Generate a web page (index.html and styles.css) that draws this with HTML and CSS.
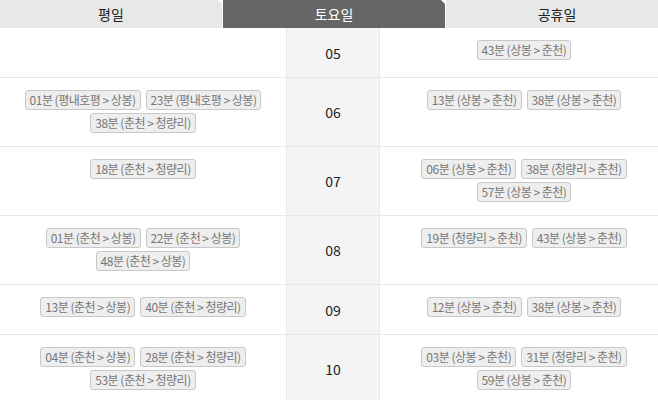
FILE: index.html
```html
<!DOCTYPE html>
<html>
<head>
    <title>시간표</title>
    <link rel="stylesheet" href="styles.css">
</head>
<body>
    <div class="timetable">
        <div class="tabs">
            <div class="tab">평일</div>
            <div class="tab active">토요일</div>
            <div class="tab">공휴일</div>
        </div>

        <div class="row">
            <div class="times"></div>
            <div class="hour">05</div>
            <div class="times">
                <span class="badge">43분 (상봉 &gt; 춘천)</span>
            </div>
        </div>

        <div class="row">
            <div class="times">
                <span class="badge">01분 (평내호평 &gt; 상봉)</span>
                <span class="badge">23분 (평내호평 &gt; 상봉)</span>
                <span class="badge">38분 (춘천 &gt; 청량리)</span>
            </div>
            <div class="hour">06</div>
            <div class="times">
                <span class="badge">13분 (상봉 &gt; 춘천)</span>
                <span class="badge">38분 (상봉 &gt; 춘천)</span>
            </div>
        </div>

        <div class="row">
            <div class="times">
                <span class="badge">18분 (춘천 &gt; 청량리)</span>
            </div>
            <div class="hour">07</div>
            <div class="times">
                <span class="badge">06분 (상봉 &gt; 춘천)</span>
                <span class="badge">38분 (청량리 &gt; 춘천)</span>
                <span class="badge">57분 (상봉 &gt; 춘천)</span>
            </div>
        </div>

        <div class="row">
            <div class="times">
                <span class="badge">01분 (춘천 &gt; 상봉)</span>
                <span class="badge">22분 (춘천 &gt; 상봉)</span>
                <span class="badge">48분 (춘천 &gt; 상봉)</span>
            </div>
            <div class="hour">08</div>
            <div class="times">
                <span class="badge">19분 (청량리 &gt; 춘천)</span>
                <span class="badge">43분 (상봉 &gt; 춘천)</span>
            </div>
        </div>

        <div class="row">
            <div class="times">
                <span class="badge">13분 (춘천 &gt; 상봉)</span>
                <span class="badge">40분 (춘천 &gt; 청량리)</span>
            </div>
            <div class="hour">09</div>
            <div class="times">
                <span class="badge">12분 (상봉 &gt; 춘천)</span>
                <span class="badge">38분 (상봉 &gt; 춘천)</span>
            </div>
        </div>

        <div class="row">
            <div class="times">
                <span class="badge">04분 (춘천 &gt; 상봉)</span>
                <span class="badge">28분 (춘천 &gt; 청량리)</span>
                <span class="badge">53분 (춘천 &gt; 청량리)</span>
            </div>
            <div class="hour">10</div>
            <div class="times">
                <span class="badge">03분 (상봉 &gt; 춘천)</span>
                <span class="badge">31분 (청량리 &gt; 춘천)</span>
                <span class="badge">59분 (상봉 &gt; 춘천)</span>
            </div>
        </div>
    </div>
</body>
</html>
```

FILE: styles.css
```css
html, body {
    overflow: hidden;
}

body {
    font-family: "Noto Sans CJK KR", "Noto Sans", sans-serif;
    background-color: #fff;
    color: #222;
    margin: 0;
    padding: 0;
}

.timetable {
    width: 668px;
}

.tabs {
    display: flex;
    gap: 1px;
}

.tab {
    flex: 1;
    height: 28px;
    line-height: 28px;
    text-align: center;
    font-size: 14px;
    color: #222;
    background-color: #e8e8e8;
    border-top-right-radius: 6px;
}

.tab.active {
    background-color: #666;
    color: #fff;
    border-top-right-radius: 0;
    clip-path: polygon(0 0, calc(100% - 4px) 0, 100% 4px, 100% 100%, 0 100%);
}

.row {
    display: grid;
    grid-template-columns: 286px 94px 288px;
    min-height: 49px;
    border-bottom: 1px solid #e8e8e8;
}

.times {
    display: flex;
    flex-wrap: wrap;
    justify-content: center;
    align-content: flex-start;
    gap: 3px 5px;
    padding: 12px 6px 13px;
}

.hour {
    display: flex;
    align-items: center;
    justify-content: center;
    background-color: #f4f4f4;
    border-left: 1px solid #e6e6e6;
    border-right: 1px solid #e6e6e6;
    font-size: 14px;
    color: #222;
}

.badge {
    display: inline-block;
    height: 20px;
    box-sizing: border-box;
    line-height: 18px;
    padding: 0 4px;
    border: 1px solid #c8c8c8;
    border-radius: 3px;
    background-color: #eee;
    color: #777;
    font-size: 12px;
    letter-spacing: -0.5px;
    white-space: nowrap;
}
```
